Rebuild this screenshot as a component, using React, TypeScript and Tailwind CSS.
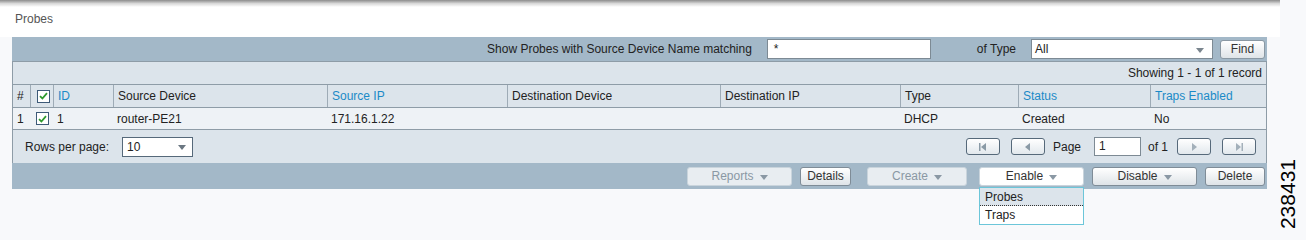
import { ReactNode } from 'react';

const columns = [
    { label: '#', link: false },
    { label: '', link: false, check: true },
    { label: 'ID', link: true },
    { label: 'Source Device', link: false },
    { label: 'Source IP', link: true },
    { label: 'Destination Device', link: false },
    { label: 'Destination IP', link: false },
    { label: 'Type', link: false },
    { label: 'Status', link: true },
    { label: 'Traps Enabled', link: true },
];

const row = ['1', '', '1', 'router-PE21', '171.16.1.22', '', '', 'DHCP', 'Created', 'No'];

const grid = 'grid grid-cols-[17px_23px_60px_214px_180px_213px_180px_118px_132px_118px]';

const Check = () => (
    <span className="w-[13px] h-[13px] border border-[#3d5a78] bg-white flex items-center justify-center">
        <svg width="9" height="8" viewBox="0 0 9 8">
            <path d="M1 4.2 L3.4 6.5 L8 1.2" fill="none" stroke="#2e9a2e" strokeWidth="1.8" />
        </svg>
    </span>
);

const Caret = ({ color = '#6b7782' }: { color?: string }) => (
    <svg width="8" height="5" viewBox="0 0 8 5" className="ml-[6px] mt-[2px] shrink-0">
        <path d="M0 0 L8 0 L4 5 Z" fill={color} />
    </svg>
);

const Btn = ({ children, w, disabled, active }: { children: ReactNode; w: string; disabled?: boolean; active?: boolean }) => (
    <div
        className={`${w} h-[19px] shrink-0 rounded-[3px] flex items-center justify-center text-[12px] ${
            disabled
                ? 'border border-[#c9d4dc] bg-[#e8edf1] text-[#8a98a4]'
                : active
                ? 'border border-[#c9d4dc] bg-white text-[#333]'
                : 'border border-[#7f8c97] bg-gradient-to-b from-white to-[#dfe4e8] text-[#333]'
        }`}
    >
        {children}
    </div>
);

const PageBtn = ({ kind }: { kind: 'first' | 'prev' | 'next' | 'last' }) => (
    <div className="w-[34px] h-[17px] rounded-[3px] border border-[#56697a] bg-gradient-to-b from-white to-[#e2e8ed] flex items-center justify-center">
        <svg width="12" height="8" viewBox="0 0 12 8">
            {kind === 'first' && (
                <>
                    <rect x="2" y="0" width="1.5" height="8" fill="#8a9aa6" />
                    <path d="M9 0 L4 4 L9 8 Z" fill="#8a9aa6" />
                </>
            )}
            {kind === 'prev' && <path d="M8 0 L3 4 L8 8 Z" fill="#8a9aa6" />}
            {kind === 'next' && <path d="M4 0 L9 4 L4 8 Z" fill="#a3b0ba" />}
            {kind === 'last' && (
                <>
                    <path d="M3 0 L8 4 L3 8 Z" fill="#a3b0ba" />
                    <rect x="8.5" y="0" width="1.5" height="8" fill="#a3b0ba" />
                </>
            )}
        </svg>
    </div>
);

export default function App() {
    return (
        <div className="w-[1306px] h-[240px] flex bg-[#f8f9fb] font-['Liberation_Sans',Arial,sans-serif] text-[12px] text-[#222] overflow-hidden">
            <div className="w-[1280px] flex flex-col">
                {/* top shadow */}
                <div className="h-[7px] bg-gradient-to-b from-[#8c8c8c] via-[#d8d8d8] to-white"></div>
                <div className="bg-white h-[30px] pl-[15px] pt-[3px] text-[12px] text-[#555]">Probes</div>

                <div className="ml-[12px] w-[1255px] flex flex-col">
                    {/* filter bar */}
                    <div className="h-[24px] bg-[#a3b8c8] flex items-center justify-end pr-[2px] whitespace-nowrap">
                        <span className="shrink-0">Show Probes with Source Device Name matching</span>
                        <div className="shrink-0 ml-[15px] w-[164px] h-[20px] bg-white border border-[#7d8a94] pl-[6px] leading-[18px]">*</div>
                        <span className="shrink-0 ml-[46px]">of Type</span>
                        <div className="shrink-0 ml-[15px] w-[182px] h-[20px] bg-white border border-[#7d8a94] pl-[3px] flex items-center justify-between pr-[8px]">
                            <span>All</span>
                            <Caret color="#7a858e" />
                        </div>
                        <div className="shrink-0 ml-[7px] w-[45px] h-[19px] rounded-[3px] border border-[#8a98a3] bg-gradient-to-b from-white to-[#dfe4e8] flex items-center justify-center text-[#333]">Find</div>
                    </div>

                    <div className="h-[23px] bg-[#dce4eb] border-x border-t border-[#8e9ca7] flex items-center justify-end pr-[4px]">
                        Showing 1 - 1 of 1 record
                    </div>

                    {/* header row */}
                    <div className={`${grid} h-[24px] bg-[#dce4eb] border border-[#8e9ca7]`}>
                        {columns.map((c, i) => (
                            <div
                                key={i}
                                className={`flex items-center px-[4px] ${i > 0 ? 'border-l border-[#9eabb6]' : ''} ${c.link ? 'text-[#1b8ac7]' : ''}`}
                            >
                                {c.check ? <span className="ml-[2px]"><Check /></span> : c.label}
                            </div>
                        ))}
                    </div>

                    {/* data row */}
                    <div className={`${grid} h-[22px] bg-[#eef2f6] border-x border-b border-[#8e9ca7]`}>
                        {row.map((v, i) => (
                            <div key={i} className="flex items-center px-[4px]">
                                {i === 1 ? <span className="ml-[2px]"><Check /></span> : v}
                            </div>
                        ))}
                    </div>

                    {/* footer */}
                    <div className="h-[33px] bg-[#dce4eb] border-x border-[#8e9ca7] flex items-center">
                        <span className="ml-[12px] w-[97px] shrink-0 whitespace-nowrap">Rows per page:</span>
                        <div className="w-[71px] h-[20px] bg-white border border-[#56697a] flex items-center justify-between pl-[4px] pr-[6px]">
                            <span>10</span>
                            <Caret color="#6b7782" />
                        </div>
                        <div className="ml-auto flex items-center mr-[10px]">
                            <PageBtn kind="first" />
                            <div className="w-[11px]"></div>
                            <PageBtn kind="prev" />
                            <span className="ml-[8px]">Page</span>
                            <div className="ml-[13px] w-[47px] h-[19px] bg-white border border-[#7d8a94] pl-[4px] leading-[17px]">1</div>
                            <span className="ml-[7px]">of 1</span>
                            <div className="w-[9px]"></div>
                            <PageBtn kind="next" />
                            <div className="w-[11px]"></div>
                            <PageBtn kind="last" />
                        </div>
                    </div>

                    {/* action bar */}
                    <div className="h-[26px] bg-[#a3b8c8] flex items-center justify-end pr-[2px] gap-[8px]">
                        <Btn w="w-[105px]" disabled>Reports <Caret color="#8a98a4" /></Btn>
                        <Btn w="w-[51px]">Details</Btn>
                        <div className="ml-[8px]">
                            <Btn w="w-[100px]" disabled>Create <Caret color="#8a98a4" /></Btn>
                        </div>
                        <div className="relative ml-[4px]">
                            <Btn w="w-[105px]" active>Enable <Caret color="#8a98a4" /></Btn>
                            <div className="absolute left-0 top-[20px] w-[105px] border border-[#6cc6d9] bg-white z-10">
                                <div className="h-[18px] bg-[#dce4eb] px-[5px] leading-[18px] border-b border-dotted border-[#333]">Probes</div>
                                <div className="h-[18px] px-[5px] leading-[18px]">Traps</div>
                            </div>
                        </div>
                        <Btn w="w-[105px]">Disable <Caret color="#8a98a4" /></Btn>
                        <Btn w="w-[60px]">Delete</Btn>
                    </div>
                </div>
            </div>

            <div className="w-[26px] flex items-end pb-[11px]">
                <span className="-ml-[3px] [writing-mode:vertical-rl] rotate-180 text-[21px] leading-[22px] text-black">238431</span>
            </div>
        </div>
    );
}
